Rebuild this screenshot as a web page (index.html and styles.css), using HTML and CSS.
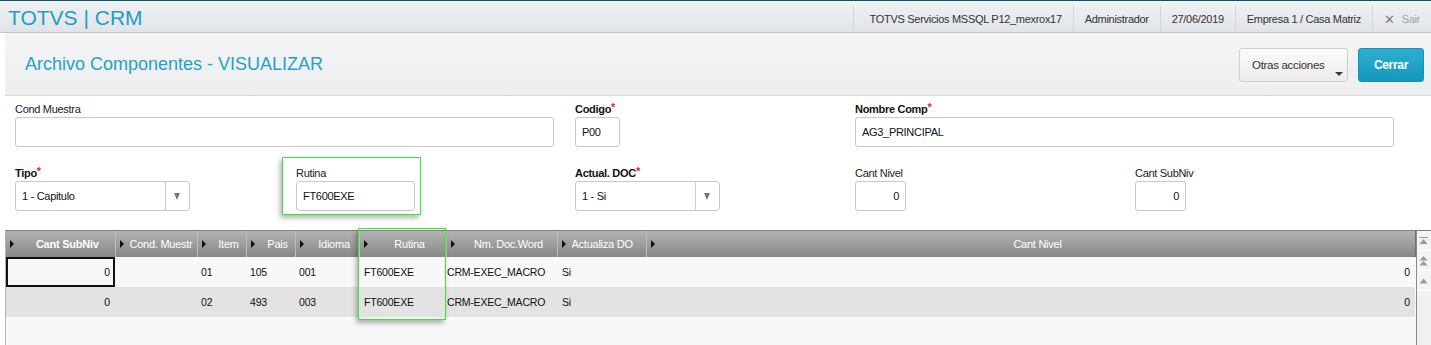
FILE: index.html
```html
<!DOCTYPE html>
<html lang="es">
<head>
    <meta charset="UTF-8">
    <title>Archivo Componentes - VISUALIZAR</title>
    <link rel="stylesheet" href="styles.css">
</head>
<body>
    <div class="topbar">
        <div class="brand">TOTVS | CRM</div>
        <div class="session">
            <span class="session-item">TOTVS Servicios MSSQL P12_mexrox17</span>
            <span class="session-item">Administrador</span>
            <span class="session-item">27/06/2019</span>
            <span class="session-item">Empresa 1 / Casa Matriz</span>
            <span class="session-item logout"><span class="x">&#x2715;</span>Sair</span>
        </div>
    </div>

    <div class="titlebar">
        <h1>Archivo Componentes - VISUALIZAR</h1>
        <div class="actions">
            <button class="btn btn-menu">Otras acciones<span class="caret"></span></button>
            <button class="btn btn-primary">Cerrar</button>
        </div>
    </div>

    <div class="form">
        <div class="field f-cond">
            <label>Cond Muestra</label>
            <div class="input"></div>
        </div>
        <div class="field f-codigo">
            <label class="req">Codigo<span>*</span></label>
            <div class="input">P00</div>
        </div>
        <div class="field f-nombre">
            <label class="req">Nombre Comp<span>*</span></label>
            <div class="input">AG3_PRINCIPAL</div>
        </div>

        <div class="field f-tipo">
            <label class="req">Tipo<span>*</span></label>
            <div class="input select">1 - Capitulo<i class="arrow"></i></div>
        </div>
        <div class="field f-rutina marked">
            <label>Rutina</label>
            <div class="input">FT600EXE</div>
        </div>
        <div class="field f-actual">
            <label class="req">Actual. DOC<span>*</span></label>
            <div class="input select">1 - Si<i class="arrow"></i></div>
        </div>
        <div class="field f-num">
            <label>Cant Nivel</label>
            <div class="input num">0</div>
        </div>
        <div class="field f-num">
            <label>Cant SubNiv</label>
            <div class="input num">0</div>
        </div>
    </div>

    <div class="browse">
        <table class="grid">
            <colgroup>
                <col style="width:109px">
                <col style="width:82px">
                <col style="width:49px">
                <col style="width:49px">
                <col style="width:64px">
                <col style="width:87px">
                <col style="width:111px">
                <col style="width:89px">
                <col style="width:769px">
            </colgroup>
            <thead>
                <tr>
                    <th class="bold"><div class="th-in"><i class="tri"></i><span>Cant SubNiv</span></div></th>
                    <th><div class="th-in"><i class="tri"></i><span class="left">Cond. Muestr</span></div></th>
                    <th><div class="th-in"><i class="tri"></i><span>Item</span></div></th>
                    <th><div class="th-in"><i class="tri"></i><span>Pais</span></div></th>
                    <th><div class="th-in"><i class="tri"></i><span>Idioma</span></div></th>
                    <th><div class="th-in"><i class="tri"></i><span>Rutina</span></div></th>
                    <th><div class="th-in"><i class="tri"></i><span>Nm. Doc.Word</span></div></th>
                    <th><div class="th-in"><i class="tri"></i><span class="left">Actualiza DO</span></div></th>
                    <th><div class="th-in"><i class="tri"></i><span>Cant Nivel</span></div></th>
                </tr>
            </thead>
            <tbody>
                <tr>
                    <td class="r sel">0</td>
                    <td></td>
                    <td>01</td>
                    <td>105</td>
                    <td>001</td>
                    <td class="p5">FT600EXE</td>
                    <td class="p1">CRM-EXEC_MACRO</td>
                    <td class="p5">Si</td>
                    <td class="r">0</td>
                </tr>
                <tr class="alt">
                    <td class="r">0</td>
                    <td></td>
                    <td>02</td>
                    <td>493</td>
                    <td>003</td>
                    <td class="p5">FT600EXE</td>
                    <td class="p1">CRM-EXEC_MACRO</td>
                    <td class="p5">Si</td>
                    <td class="r">0</td>
                </tr>
            </tbody>
        </table>
        <div class="scroll">
            <div class="sbtn">
                <svg width="9" height="8" viewBox="0 0 9 8"><rect x="0" y="0" width="9" height="1" fill="#9a9a9a"/><path d="M4.5 2 L8.5 7 L0.5 7 Z" fill="#9a9a9a"/></svg>
            </div>
            <div class="sbtn">
                <svg width="9" height="10" viewBox="0 0 9 10"><path d="M4.5 0 L8.5 4.5 L0.5 4.5 Z" fill="#9a9a9a"/><path d="M4.5 5 L8.5 9.5 L0.5 9.5 Z" fill="#9a9a9a"/></svg>
            </div>
            <div class="sbtn">
                <svg width="9" height="6" viewBox="0 0 9 6"><path d="M4.5 0.5 L8.5 5.5 L0.5 5.5 Z" fill="#9a9a9a"/></svg>
            </div>
        </div>
        <div class="mark-col"></div>
    </div>
</body>
</html>
```

FILE: styles.css
```css
* {
    margin: 0;
    padding: 0;
    box-sizing: border-box;
}
body {
    width: 1431px;
    height: 345px;
    overflow: hidden;
    background: #fff;
    font-family: "Liberation Sans", Arial, sans-serif;
    font-size: 11px;
    letter-spacing: -0.3px;
    color: #222;
}

/* barra superior */
.topbar {
    height: 33px;
    display: flex;
    justify-content: space-between;
    background: linear-gradient(#eff1f3, #e1e4e7);
    border-top: 1px solid #0d5668;
    border-bottom: 1px solid #c4c8cc;
}
.brand {
    padding: 3px 0 0 8px;
    font-size: 21px;
    line-height: 28px;
    letter-spacing: 0;
    color: #1f9dc6;
}
.session {
    display: flex;
    padding-right: 11px;
}
.session-item {
    display: flex;
    align-items: center;
    height: 26px;
    margin-top: 5px;
    padding: 0 11px;
    border-left: 1px solid #d3d6d9;
    color: #333;
}
.session-item:first-child {
    padding-left: 16px;
}
.logout {
    color: #a3a3a3;
    padding-right: 0;
}
.logout .x {
    font-size: 13px;
    color: #808080;
    margin-right: 7px;
}

/* titulo */
.titlebar {
    height: 63px;
    margin-left: 5px;
    display: flex;
    align-items: center;
    justify-content: space-between;
    padding: 0 7px 0 20px;
    background: linear-gradient(#f4f4f5, #eceef0);
    border-bottom: 1px solid #d9d9d9;
}
.titlebar h1 {
    font-size: 18px;
    font-weight: normal;
    letter-spacing: 0;
    color: #1fa2c8;
    margin-top: 1px;
}
.actions {
    display: flex;
    gap: 10px;
    margin-top: 2px;
}
.btn {
    height: 34px;
    border-radius: 3px;
    font-family: "Liberation Sans", Arial, sans-serif;
    letter-spacing: -0.3px;
}
.btn-menu {
    position: relative;
    width: 109px;
    padding-left: 12px;
    text-align: left;
    font-size: 11.5px;
    color: #333;
    background: linear-gradient(#fbfbfb, #ebebeb);
    border: 1px solid #cfcfcf;
}
.caret {
    position: absolute;
    right: 4px;
    bottom: 5px;
    border-top: 4px solid #3a3a3a;
    border-left: 4px solid transparent;
    border-right: 4px solid transparent;
}
.btn-primary {
    width: 66px;
    font-size: 12px;
    font-weight: bold;
    color: #fff;
    background: linear-gradient(#2eadd1, #1598be);
    border: 1px solid #1791b5;
}

/* formulario */
.form {
    display: grid;
    grid-template-columns: repeat(5, 280px);
    align-content: start;
    row-gap: 19px;
    padding: 6px 0 0 15px;
    height: 134px;
}
.field label {
    display: block;
    height: 14px;
    line-height: 14px;
    margin-bottom: 1px;
    white-space: nowrap;
    color: #222;
}
.field label.req {
    font-weight: bold;
    color: #111;
}
.field label span {
    position: relative;
    top: -2px;
    color: #e0262b;
    font-size: 11px;
}
.input {
    position: relative;
    height: 30px;
    display: flex;
    align-items: center;
    padding-left: 6px;
    background: #fff;
    border: 1px solid #c9c9c9;
    border-radius: 3px;
    color: #111;
}
.f-cond {
    grid-column: 1 / 3;
    width: 539px;
}
.f-codigo {
    width: 45px;
}
.f-nombre {
    grid-column: 4 / 6;
    width: 539px;
}
.f-tipo {
    width: 175px;
}
.f-rutina {
    width: 119px;
    margin-left: 1px;
}
.f-actual {
    width: 145px;
}
.f-num {
    width: 51px;
}
.input.num {
    justify-content: flex-end;
    padding-right: 6px;
}
.select .arrow {
    position: absolute;
    right: 0;
    top: 0;
    width: 24px;
    height: 28px;
    border-left: 1px solid #cfcfcf;
}
.select .arrow::after {
    content: "";
    position: absolute;
    left: 8px;
    top: 11px;
    border-top: 7px solid #777;
    border-left: 3.5px solid transparent;
    border-right: 3.5px solid transparent;
}

/* marca verde */
.marked {
    position: relative;
}
.marked::after {
    content: "";
    position: absolute;
    left: -14px;
    top: -9px;
    right: -6px;
    bottom: -4px;
    border: 1px solid #35e935;
    box-shadow: -2px 3px 5px rgba(0, 0, 0, 0.3);
}

/* grilla */
.browse {
    position: relative;
    display: flex;
    margin-left: 5px;
    height: 115px;
    background: #f8f8f8;
    border-top: 1px solid #7f7f7f;
    border-left: 1px solid #b5b5b5;
}
.grid {
    width: 1408px;
    table-layout: fixed;
    border-collapse: collapse;
    align-self: flex-start;
}
.grid th {
    height: 26px;
    padding: 0;
    font-weight: normal;
    font-size: 11px;
    letter-spacing: -0.25px;
    color: #fff;
    background: linear-gradient(#b3b3b3, #878787);
    border-right: 1px solid #bdbdbd;
}
.grid th:last-child {
    border-right: 1px solid #6f6f6f;
}
.grid th.bold {
    font-weight: bold;
}
.th-in {
    display: flex;
    align-items: center;
    padding-left: 4px;
}
.tri {
    flex: none;
    width: 0;
    height: 0;
    border-left: 4px solid #111;
    border-top: 4px solid transparent;
    border-bottom: 4px solid transparent;
    margin-right: 6px;
}
.th-in span {
    flex: 1;
    min-width: 0;
    overflow: hidden;
    white-space: nowrap;
    text-align: center;
}
.th-in span.left {
    text-align: left;
}
.grid td {
    height: 30px;
    padding: 0 4px;
    font-size: 10.5px;
    letter-spacing: -0.2px;
    color: #111;
    white-space: nowrap;
    overflow: hidden;
    background: #f8f8f8;
}
.grid tr.alt td {
    background: #e3e3e3;
}
.grid td.r {
    text-align: right;
    padding-right: 5px;
}
.grid td.p5 {
    padding-left: 5px;
}
.grid td.p1 {
    padding-left: 1px;
}
.grid td.sel {
    box-shadow: inset 0 0 0 2px #111;
}
.scroll {
    width: 17px;
    border-left: 1px solid #8a8a8a;
    background: #f1f1f1;
}
.sbtn {
    height: 20px;
    display: flex;
    align-items: center;
    justify-content: center;
    background: #f3f3f3;
    border-bottom: 1px solid #fff;
}
.mark-col {
    position: absolute;
    left: 352px;
    top: -3px;
    width: 88px;
    height: 92px;
    border: 1px solid #35e935;
    box-shadow: -2px 3px 5px rgba(0, 0, 0, 0.3);
}
```
